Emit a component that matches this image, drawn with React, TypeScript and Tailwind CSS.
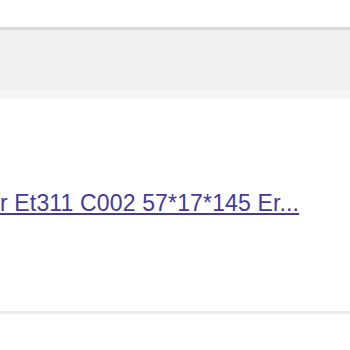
export default function App() {
  return (
    <div className="w-[350px] h-[350px] bg-white overflow-hidden flex flex-col" style={{ fontFamily: '"Liberation Sans", Arial, sans-serif' }}>
      <div className="h-[27px] shrink-0" />
      <div className="shrink-0 border-t-[3px] border-[#d9d9d9] bg-[#f0f0f0] h-[64px]" />
      <div className="shrink-0 h-[8px] bg-[#f5f5f5]" />
      <div className="h-[91px] shrink-0" />
      <div className="shrink-0 flex overflow-hidden whitespace-nowrap">
        <a href="#" className="text-[23px] leading-[27px] tracking-[0.15px] text-[#45399a] underline underline-offset-2">
          r Et311 C002 57*17*145 Er...
        </a>
      </div>
      <div className="h-[94px] shrink-0" />
      <div className="shrink-0 h-[3px] bg-[#ececec]" />
    </div>
  );
}
